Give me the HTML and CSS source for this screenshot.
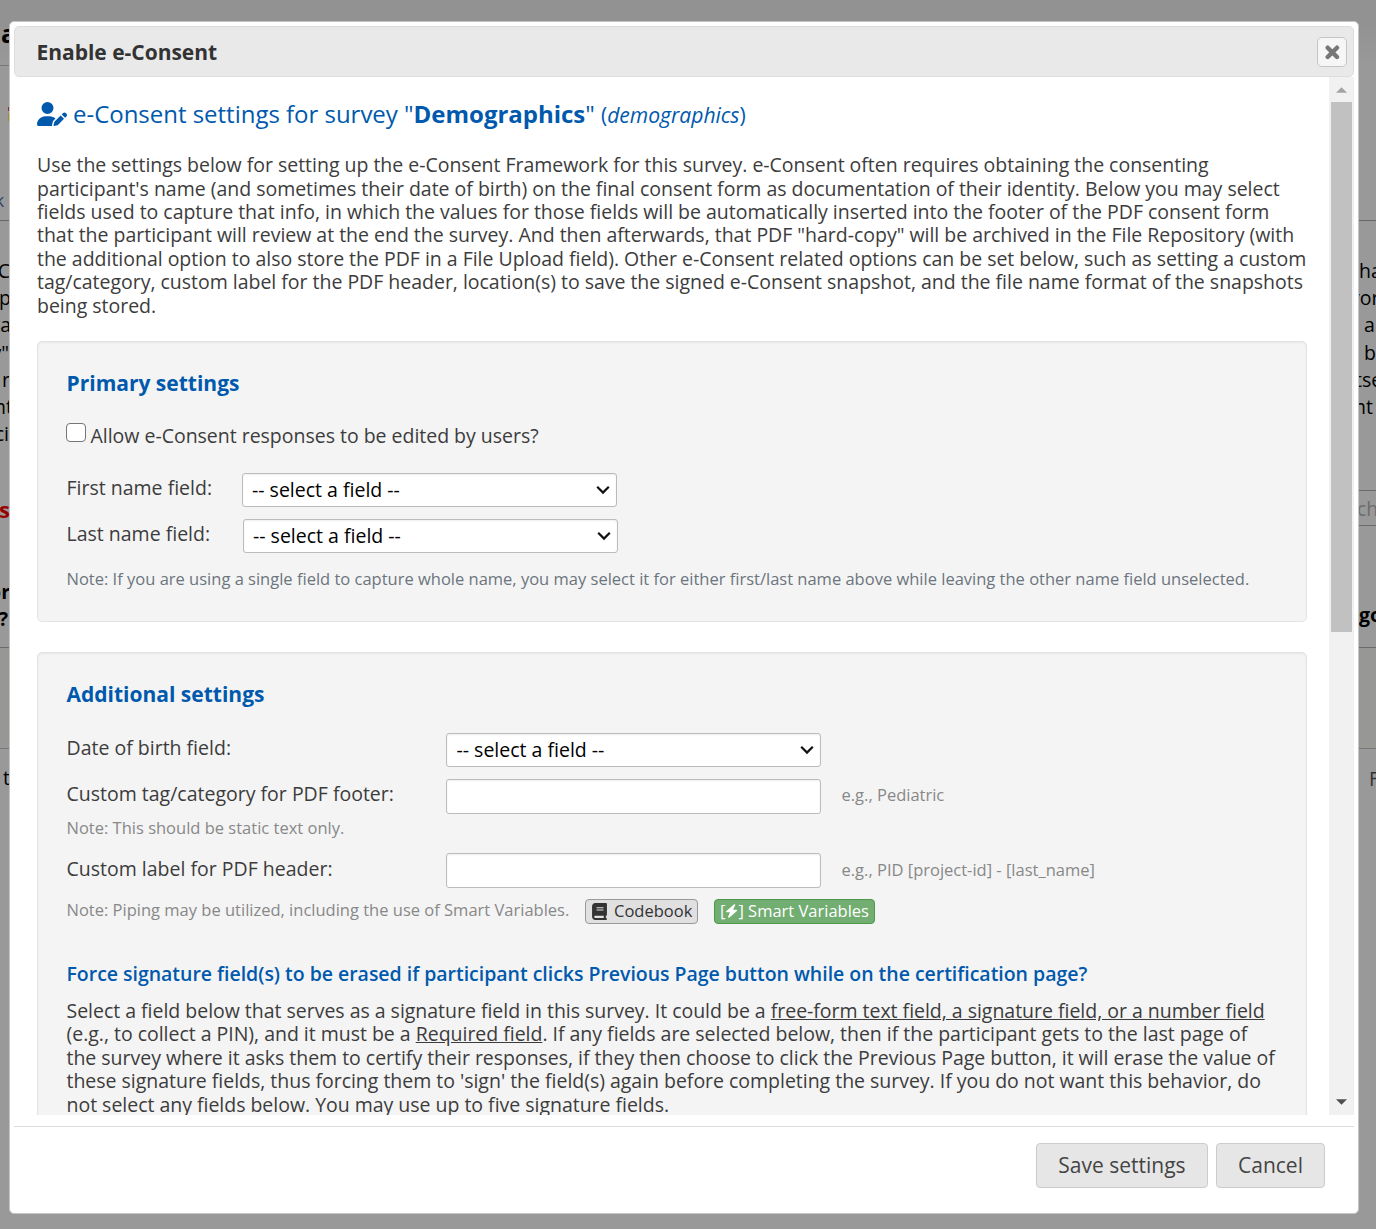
FILE: index.html
```html
<!DOCTYPE html>
<html lang="en">
<head>
<meta charset="utf-8">
<title>Enable e-Consent</title>
<link rel="stylesheet" href="styles.css">
</head>
<body>
<div class="page">
  <div class="side side-left">
    <div class="side-title">a</div>
    <div class="side-tab"><span class="pencil"></span><span class="crumb">k ‘</span></div>
    <div class="side-text"><div><span class="out-1">C</span><br><span class="out-2">p</span><br><span class="out-2">ta</span><br>y"<br><span class="out-1">r</span><br><span class="out-4">nt</span><br>ci</div></div>
    <div class="side-alert">se</div>
    <div class="side-head"><div><span class="out-1">or</span><br><span class="in-1">?</span></div></div>
    <div class="side-row"></div>
    <div class="side-foot"><span class="out-1">t</span></div>
  </div>
  <div class="side side-right">
    <div class="side-top"></div>
    <div class="side-text">ha<br><span class="tuck-o">vor</span><br>&nbsp;a<br>&nbsp;b<br><span class="tuck">tse</span><br><span class="tuck-n">nt</span></div>
    <div class="side-search">ch</div>
    <div class="side-head">go</div>
    <div class="side-row"></div>
    <div class="side-foot">F</div>
  </div>
</div>

<div class="dialog">
  <header class="titlebar">
    <span>Enable e-Consent</span>
    <button class="close" aria-label="Close">
      <svg width="16" height="16" viewBox="0 0 16 16"><path d="M3.700 3.700L13 13M13 3.700L3.700 13" stroke="#777" stroke-width="4.400" stroke-linecap="round"/></svg>
    </button>
  </header>
  <div class="viewport">
    <main class="content">
      <h1 class="survey-title">
        <svg class="user-pen" width="30" height="24" viewBox="0 0 640 512"><path fill="#0059ad" d="M224 256A128 128 0 1 0 224 0a128 128 0 1 0 0 256zm-45.700 48C79.800 304 0 383.800 0 482.300C0 498.700 13.300 512 29.700 512H322.800c-3.100-8.800-3.700-18.400-1.400-27.800l15-60.100c2.800-11.300 8.600-21.500 16.800-29.700l40.300-40.300c-32.100-31-75.700-50.100-123.900-50.100H178.300zm435.500-68.300c-15.600-15.600-40.900-15.600-56.600 0l-29.400 29.400 71 71 29.400-29.400c15.600-15.600 15.600-40.900 0-56.600l-14.400-14.400zM375.900 417c-4.100 4.100-7 9.200-8.400 14.900l-15 60.100c-1.400 5.500 .2 11.200 4.200 15.200s9.700 5.600 15.200 4.200l60.100-15c5.600-1.400 10.800-4.300 14.900-8.400L576.100 358.700l-71-71L375.900 417z"/></svg>
        <span>e-Consent settings for survey "<b>Demographics</b>" <span class="paren">(<i>demographics</i>)</span></span>
      </h1>
      <p class="intro">Use the settings below for setting up the e-Consent Framework for this survey. e-Consent often requires obtaining the consenting<br>participant's name (and sometimes their date of birth) on the final consent form as documentation of their identity. Below you may select<br>fields used to capture that info, in which the values for those fields will be automatically inserted into the footer of the PDF consent form<br>that the participant will review at the end the survey. And then afterwards, that PDF "hard-copy" will be archived in the File Repository (with<br>the additional option to also store the PDF in a File Upload field). Other e-Consent related options can be set below, such as setting a custom<br>tag/category, custom label for the PDF header, location(s) to save the signed e-Consent snapshot, and the file name format of the snapshots<br>being stored.</p>

      <section class="box primary">
        <h2>Primary settings</h2>
        <label class="check"><span class="checkbox"></span>Allow e-Consent responses to be edited by users?</label>
        <div class="row"><span class="name">First name field:</span><div class="field">-- select a field --<svg width="14" height="10" viewBox="0 0 14 10"><path d="M1.200 1.800L7 7.600L12.800 1.800" fill="none" stroke="#111" stroke-width="2.200"/></svg></div></div>
        <div class="row row-last"><span class="name">Last name field:</span><div class="field">-- select a field --<svg width="14" height="10" viewBox="0 0 14 10"><path d="M1.200 1.800L7 7.600L12.800 1.800" fill="none" stroke="#111" stroke-width="2.200"/></svg></div></div>
        <p class="note slate">Note: If you are using a single field to capture whole name, you may select it for either first/last name above while leaving the other name field unselected.</p>
      </section>

      <section class="box additional">
        <h2>Additional settings</h2>
        <div class="row"><span class="name">Date of birth field:</span><div class="field">-- select a field --<svg width="14" height="10" viewBox="0 0 14 10"><path d="M1.200 1.800L7 7.600L12.800 1.800" fill="none" stroke="#111" stroke-width="2.200"/></svg></div></div>
        <div class="row"><span class="name">Custom tag/category for PDF footer:</span><div class="field input"></div><span class="hint hint-tag">e.g., Pediatric</span></div>
        <p class="note static">Note: This should be static text only.</p>
        <div class="row row-label"><span class="name">Custom label for PDF header:</span><div class="field input"></div><span class="hint">e.g., PID [project-id] - [last_name]</span></div>
        <div class="piping">
          <p class="note">Note: Piping may be utilized, including the use of Smart Variables.</p>
          <button class="tag codebook"><svg width="15" height="17" viewBox="0 0 448 512"><path fill="#333" d="M96 0C43 0 0 43 0 96V416c0 53 43 96 96 96H416c17.700 0 32-14.300 32-32s-14.300-32-32-32V384c17.700 0 32-14.300 32-32V32c0-17.700-14.300-32-32-32H96zm0 384H352v64H96c-17.700 0-32-14.300-32-32s14.300-32 32-32zm32-240c0-8.800 7.200-16 16-16H336c8.800 0 16 7.200 16 16s-7.200 16-16 16H144c-8.800 0-16-7.200-16-16zm16 48H336c8.800 0 16 7.200 16 16s-7.200 16-16 16H144c-8.800 0-16-7.200-16-16s7.200-16 16-16z"/></svg><span>Codebook</span></button>
          <button class="tag smart"><span>[</span><svg width="13" height="14" viewBox="0 0 12 14"><path fill="#fff" d="M8.600 0.300L0.700 7.200Q0.300 8 1.100 8.200H4.500L2.500 13.100Q3 14.200 4 13.500L11.400 6.900Q11.900 6 11 5.800H7.600L9.800 1Q9.600 0 8.600 .3z"/></svg><span>] Smart Variables</span></button>
        </div>
        <h3>Force signature field(s) to be erased if participant clicks Previous Page button while on the certification page?</h3>
        <p class="signature">Select a field below that serves as a signature field in this survey. It could be a <u>free-form text field, a signature field, or a number field</u><br>(e.g., to collect a PIN), and it must be a <u>Required field</u>. If any fields are selected below, then if the participant gets to the last page of<br>the survey where it asks them to certify their responses, if they then choose to click the Previous Page button, it will erase the value of<br>these signature fields, thus forcing them to 'sign' the field(s) again before completing the survey. If you do not want this behavior, do<br>not select any fields below. You may use up to five signature fields.</p>
      </section>
    </main>
    <div class="scrollbar">
      <div class="arrow"><svg width="11" height="6" viewBox="0 0 12 6"><path d="M0 6L6 0L12 6z" fill="#a3a3a3"/></svg></div>
      <div class="thumb"></div>
      <div class="arrow down"><svg width="11" height="6" viewBox="0 0 12 6"><path d="M0 0L6 6L12 0z" fill="#505050"/></svg></div>
    </div>
  </div>
  <footer class="actions">
    <button class="btn save">Save settings</button>
    <button class="btn cancel">Cancel</button>
  </footer>
</div>
</body>
</html>
```
FILE: styles.css
```css
* { box-sizing: border-box; }
body {
  margin: 0;
  height: 1229px;
  overflow: hidden;
  position: relative;
  background: #999;
  font: 19.5px/23.4px "Open Sans", sans-serif;
  color: #3c3c3c;
}
h1, h2, h3, p { margin: 0; font-weight: normal; }
button { font-family: inherit; margin: 0; padding: 0; }
svg { display: block; flex: none; }

/* dimmed page behind the dialog */
.page {
  display: flex;
  justify-content: space-between;
  height: 1229px;
  background: linear-gradient(#929292 0, #929292 22px, #999 66px);
  color: #000;
}
.side { overflow: hidden; white-space: nowrap; display: flex; flex-direction: column; }
.side-left { width: 9px; align-items: flex-end; }
.side-right { width: 17px; }
.side > div { flex: none; }
.side-left > div { min-width: 9px; display: flex; justify-content: flex-end; text-align: right; }
.side-left > .side-title { justify-content: flex-start; height: 66px; width: 9px; padding: 19px 0 0 1px; border-bottom: 1px solid #777; font-weight: 700; font-size: 25px; line-height: 28px; }
.side-left > .side-tab { height: 155px; border-bottom: 1px solid #666; padding-top: 41px; flex-direction: column; align-items: flex-end; justify-content: flex-start; }
.pencil { width: 1px; height: 14px; background: linear-gradient(#833 4px, #999 4px, #999 6px, #a98c20 6px); }
.crumb { margin: 68px -3px 0 0; color: #334566; font-size: 18px; }
.out-1 { margin-right: -1px; }
.out-2 { margin-right: -2px; }
.out-4 { margin-right: -4px; }
.in-1 { margin-right: 1px; }
.side-text { height: 247px; padding-top: 36px; line-height: 27.2px; }
.side-left > .side-alert { justify-content: flex-start; width: 9px; margin-top: 26px; height: 31px; line-height: 30px; font-size: 22px; font-weight: 700; color: #900; text-indent: -1px; }
.side-left .side-head { height: 123px; padding-top: 53px; border-bottom: 1px solid #6b6b6b; font-weight: 700; line-height: 27px; }
.side-row { height: 101px; border-bottom: 1px solid #787878; background: #979795; }
.side-foot { padding-top: 17px; }
.side-top { height: 221px; border-bottom: 1px solid #666; }
.side-right .side-text { height: 269px; }
.tuck { margin-left: -4px; }
.tuck-o { margin-left: -9px; }
.tuck-n { margin-left: -5px; }
.side-search { height: 36px; line-height: 35px; text-indent: -2px; border: solid #6b6b6b; border-width: 1px 0; color: #6d6d6d; }
.side-right .side-head { height: 122px; padding-top: 77px; border-bottom: 1px solid #6b6b6b; font-weight: 700; }
.side-right .side-foot { padding: 18px 0 0 10px; color: #333; }

.dialog {
  position: absolute;
  left: 9px;
  top: 21px;
  width: 1350px;
  height: 1193px;
  padding: 4px;
  display: flex;
  flex-direction: column;
  background: #fff;
  border: 1px solid #c5c5c5;
  border-radius: 5px;
  white-space: nowrap;
}
.titlebar {
  height: 51px;
  flex: none;
  display: flex;
  align-items: center;
  justify-content: space-between;
  padding: 0 6px 0 21.500px;
  border: 1px solid #ddd;
  border-radius: 5px;
  background: #e9e9e9;
  color: #333;
  font-weight: 700;
  font-size: 21px;
  letter-spacing: -.02px;
}
.titlebar span { padding-top: 2px; }
.close {
  width: 30px;
  height: 30px;
  display: grid;
  place-items: center;
  border: 1px solid #c5c5c5;
  border-radius: 5px;
  background: #f6f6f6;
}
.viewport { height: 1038px; flex: none; display: flex; justify-content: space-between; overflow: hidden; }
.content { width: 1293px; padding: 21px 0 0 23px; }
.survey-title { display: flex; align-items: center; gap: 6px; height: 32px; color: #0059ad; font-size: 24px; line-height: 32px; letter-spacing: -.02px; }
.paren { font-size: 21.100px; }
.intro { margin-top: 23.200px; height: 187.800px; letter-spacing: -.018px; }

.box {
  width: 1270px;
  padding: 0 28.500px;
  border: 1px solid #e3e3e3;
  border-radius: 5px;
  background: #f4f4f4;
  box-shadow: inset 0 1px 2px rgba(0, 0, 0, .06);
}
.primary { height: 281px; padding-top: 26px; }
.additional { height: 620px; margin-top: 30px; padding-top: 26px; }
h2 { height: 30px; line-height: 30px; color: #0059ad; font-size: 21px; font-weight: 700; }
.check { display: flex; align-items: flex-start; gap: 5px; margin: 25px 0 0 -.5px; height: 50px; line-height: 25px; letter-spacing: -.018px; }
.checkbox { width: 19.500px; height: 19.500px; border: 1.500px solid #767676; border-radius: 4px; background: #fff; }
.row { display: flex; height: 46px; }
.name { width: 175.500px; height: 29px; line-height: 29px; }
.row-last .name { width: 176.500px; }
.field {
  width: 375px;
  height: 34px;
  display: flex;
  align-items: center;
  justify-content: space-between;
  padding: 0 6px 0 9px;
  border: 1px solid #bbb;
  border-radius: 3px;
  background: #fff;
  box-shadow: inset 0 1px 2px rgba(0, 0, 0, .07);
  color: #000;
}
.additional .field { padding-left: 9.500px; }
.input { height: 35px; }
.note { height: 24px; line-height: 24px; font-size: 16.500px; color: #888; }
.slate { margin-top: 2px; color: #6c757d; }
.additional h2 { margin-bottom: 24px; }
.additional .name { width: 379.500px; }
.additional .row-label .name { line-height: 31px; }
.hint { margin-left: 20.500px; line-height: 33px; font-size: 16.500px; color: #888; }
.hint-tag { line-height: 31px; }
.static { margin: -9px 0 13px; height: 24px; }
.piping { display: flex; height: 25px; }
.piping .note { width: 518.500px; line-height: 21px; }
.tag {
  height: 25px;
  display: flex;
  align-items: center;
  border: 1px solid #999;
  border-radius: 4px;
  background: #e0e0e0;
  color: #333;
  font-size: 16.500px;
  line-height: 21px;
}
.tag span { padding-bottom: 2px; }
.codebook { width: 113px; padding-left: 6px; gap: 7px; }
.smart { width: 161px; margin-left: 16px; padding-left: 5px; background: #72ad72; border-color: #4c994c; color: #fff; font-weight: 500; }
h3 { margin-top: 37px; height: 25px; line-height: 25px; color: #0059ad; font-size: 19.500px; font-weight: 600; letter-spacing: -.025px; }
.signature { margin-top: 13px; letter-spacing: -.022px; }

.scrollbar { width: 25px; padding-right: 1px; background: #f1f1f1; display: flex; flex-direction: column; align-items: center; }
.arrow { height: 25px; display: grid; place-items: center; }
.thumb { width: 21px; height: 530px; margin-left: 1px; background: #c1c1c1; }
.down { margin-top: auto; padding-bottom: 2px; }
.actions {
  height: 74px;
  margin-top: 11px;
  padding: 16px 29px 0 0;
  display: flex;
  justify-content: flex-end;
  gap: 8px;
  border-top: 1px solid #ddd;
}
.btn { height: 45px; padding-bottom: 2px; border: 1px solid #ccc; border-radius: 4px; background: #e6e6e6; color: #444; font-size: 21px; }
.save { width: 172px; }
.cancel { width: 109px; }
```
